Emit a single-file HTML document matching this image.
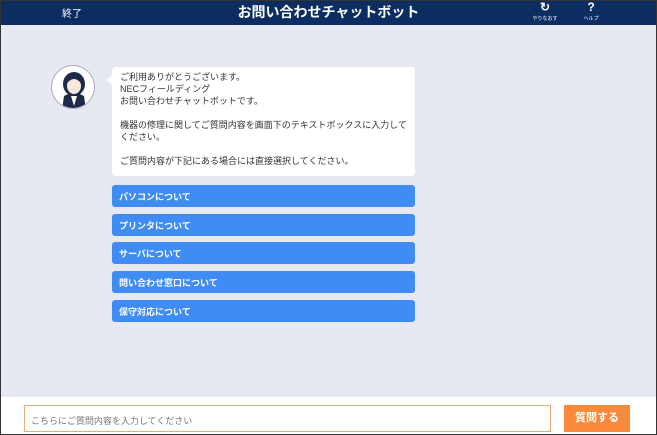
<!DOCTYPE html>
<html><head><meta charset="utf-8"><style>
*{margin:0;padding:0;box-sizing:border-box}
body{width:657px;height:435px;overflow:hidden;font-family:"Liberation Sans","Noto Sans CJK JP",sans-serif;background:#e6e9ef;position:relative}
.frame{position:absolute;left:0;top:0;width:657px;height:435px;border:1px solid #333;pointer-events:none;z-index:9}
.hd{position:absolute;left:0;top:0;width:657px;height:25px;background:#0c2d62;color:#fff}
.end{position:absolute;left:62px;top:5px;font-size:10px}
.title{position:absolute;left:0;width:657px;top:2px;text-align:center;font-size:14px;font-weight:bold}
.ic{position:absolute;top:0;font-size:5px;text-align:center;width:34px;white-space:nowrap}
.ic b{display:block;font-size:12px;line-height:15px}
.av{position:absolute;left:51px;top:65px;width:44px;height:44px;border-radius:50%;background:#fff;border:1px solid #aab;overflow:hidden}
.bub{position:absolute;left:112px;top:67px;width:303px;height:109px;background:#fff;border-radius:4px;font-size:9px;line-height:12px;color:#333;padding:4px 8px}
.bub:before{content:"";position:absolute;left:-5px;top:8px;border:5px solid transparent;border-right-color:#fff;border-left:0}
.btn{position:absolute;left:112px;width:303px;height:22px;background:#3e8cf4;border-radius:3px;color:#fff;font-size:9px;font-weight:bold;padding:5px 7px}
.foot{position:absolute;left:0;top:397px;width:657px;height:38px;background:#fff}
.in{position:absolute;left:24px;top:8px;width:527px;height:27px;border:1px solid #f0a878;font-size:9px;color:#777;padding:8px 6px}
.sb{position:absolute;left:564px;top:8px;width:66px;height:27px;background:#f98a3c;color:#fff;font-size:11px;font-weight:bold;text-align:center;line-height:27px}
</style></head><body>
<div class="frame"></div>
<div class="hd"><div class="end">終了</div><div class="title">お問い合わせチャットボット</div>
<div class="ic" style="left:528px"><b>↻</b>やりなおす</div><div class="ic" style="left:574px"><b>?</b>ヘルプ</div></div>
<div class="av"><svg width="44" height="44" viewBox="0 0 44 44"><path d="M10 44 L12 30 Q22 24 32 30 L34 44Z" fill="#1d2a4a"/><path d="M19 30 L22 40 L25 30Z" fill="#fff"/><ellipse cx="22" cy="18" rx="11" ry="12" fill="#1d2a4a"/><ellipse cx="22" cy="20" rx="7" ry="8" fill="#fbe6dc"/><path d="M14 14 Q22 6 30 14 L28 16 Q22 10 16 16Z" fill="#1d2a4a"/></svg></div>
<div class="bub">ご利用ありがとうございます。<br>NECフィールディング<br>お問い合わせチャットボットです。<br><br>機器の修理に関してご質問内容を画面下のテキストボックスに入力して<br>ください。<br><br>ご質問内容が下記にある場合には直接選択してください。</div>
<div class="btn" style="top:185px">パソコンについて</div>
<div class="btn" style="top:214px">プリンタについて</div>
<div class="btn" style="top:242px">サーバについて</div>
<div class="btn" style="top:271px">問い合わせ窓口について</div>
<div class="btn" style="top:300px">保守対応について</div>
<div class="foot"><div class="in">こちらにご質問内容を入力してください</div><div class="sb">質問する</div></div>
</body></html>
